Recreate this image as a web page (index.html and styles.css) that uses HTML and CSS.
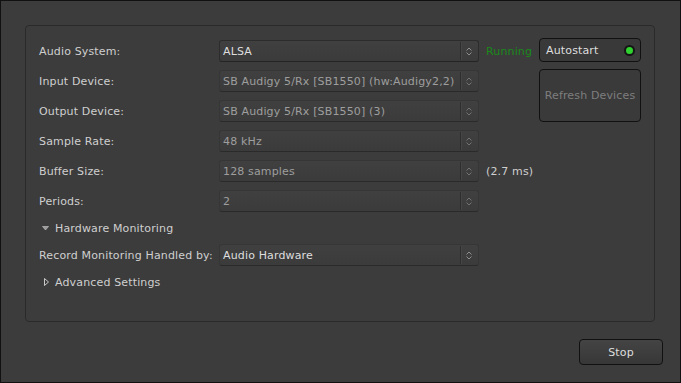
FILE: index.html
```html
<!DOCTYPE html>
<html lang="en">
<head>
  <meta charset="UTF-8" />
  <title>Audio/MIDI Setup</title>
  <link rel="stylesheet" href="styles.css">
</head>
<body>
  <div class="window">
    <div class="frame">
      <div class="grid">
        <div class="label r1">Audio System:</div>
        <div class="combo r1">
          <span class="value">ALSA</span>
          <span class="sep"></span>
          <svg class="arrows" width="6" height="9" viewBox="0 0 6 9"><path d="M0.5 3.5 L3 1 L5.5 3.5 M0.5 5.5 L3 8 L5.5 5.5" fill="none" stroke="#8e8e8e" stroke-width="1"/></svg>
        </div>
        <div class="note running r1">Running</div>
        <button class="btn autostart r1">Autostart <span class="led"></span></button>

        <div class="label r2">Input Device:</div>
        <div class="combo off r2">
          <span class="value">SB Audigy 5/Rx [SB1550] (hw:Audigy2,2)</span>
          <span class="sep"></span>
          <svg class="arrows" width="6" height="9" viewBox="0 0 6 9"><path d="M0.5 3.5 L3 1 L5.5 3.5 M0.5 5.5 L3 8 L5.5 5.5" fill="none" stroke="#737373" stroke-width="1"/></svg>
        </div>
        <button class="btn refresh" disabled>Refresh Devices</button>

        <div class="label r3">Output Device:</div>
        <div class="combo off r3">
          <span class="value">SB Audigy 5/Rx [SB1550] (3)</span>
          <span class="sep"></span>
          <svg class="arrows" width="6" height="9" viewBox="0 0 6 9"><path d="M0.5 3.5 L3 1 L5.5 3.5 M0.5 5.5 L3 8 L5.5 5.5" fill="none" stroke="#737373" stroke-width="1"/></svg>
        </div>

        <div class="label r4">Sample Rate:</div>
        <div class="combo off r4">
          <span class="value">48 kHz</span>
          <span class="sep"></span>
          <svg class="arrows" width="6" height="9" viewBox="0 0 6 9"><path d="M0.5 3.5 L3 1 L5.5 3.5 M0.5 5.5 L3 8 L5.5 5.5" fill="none" stroke="#737373" stroke-width="1"/></svg>
        </div>

        <div class="label r5">Buffer Size:</div>
        <div class="combo off r5">
          <span class="value">128 samples</span>
          <span class="sep"></span>
          <svg class="arrows" width="6" height="9" viewBox="0 0 6 9"><path d="M0.5 3.5 L3 1 L5.5 3.5 M0.5 5.5 L3 8 L5.5 5.5" fill="none" stroke="#737373" stroke-width="1"/></svg>
        </div>
        <div class="note wide r5">(2.7 ms)</div>

        <div class="label r6">Periods:</div>
        <div class="combo off r6">
          <span class="value">2</span>
          <span class="sep"></span>
          <svg class="arrows" width="6" height="9" viewBox="0 0 6 9"><path d="M0.5 3.5 L3 1 L5.5 3.5 M0.5 5.5 L3 8 L5.5 5.5" fill="none" stroke="#737373" stroke-width="1"/></svg>
        </div>

        <div class="expander r7">
          <svg class="tri" width="7" height="5" viewBox="0 0 7 5"><path d="M0.5 0.5 L6.5 0.5 L3.5 4 Z" fill="#9a9a9a" stroke="#c8c8c8" stroke-width="0.6"/></svg>
          Hardware Monitoring
        </div>

        <div class="label r8">Record Monitoring Handled by:</div>
        <div class="combo off r8 bright">
          <span class="value">Audio Hardware</span>
          <span class="sep"></span>
          <svg class="arrows" width="6" height="9" viewBox="0 0 6 9"><path d="M0.5 3.5 L3 1 L5.5 3.5 M0.5 5.5 L3 8 L5.5 5.5" fill="none" stroke="#8e8e8e" stroke-width="1"/></svg>
        </div>

        <div class="expander r9">
          <svg class="tri closed" width="5" height="8" viewBox="0 0 5 8"><path d="M0.5 0.5 L4.5 4 L0.5 7.5 Z" fill="none" stroke="#c8c8c8" stroke-width="1"/></svg>
          Advanced Settings
        </div>
      </div>
    </div>
    <div class="actions">
      <button class="btn stop">Stop</button>
    </div>
  </div>
</body>
</html>
```

FILE: styles.css
```css
body {
  margin: 0;
  background: #3c3c3c;
  font-family: "DejaVu Sans", sans-serif;
  font-size: 11px;
  letter-spacing: 0.15px;
  color: #cfcfcf;
}

.window {
  width: 681px;
  height: 383px;
  box-sizing: border-box;
  border: 1px solid #111;
  background: #3c3c3c;
  padding: 24px 17px 0 24px;
}

.frame {
  width: 630px;
  height: 297px;
  box-sizing: border-box;
  border: 1px solid #2a2a2a;
  border-radius: 4px;
  padding: 14px 13px 0 13px;
}

.grid {
  display: grid;
  grid-template-columns: 180px 260px 60px 102px;
  grid-template-rows: 22px 22px 22px 22px 22px 22px 16px 22px 16px;
  row-gap: 8px;
  align-items: center;
}

.r1 { grid-row: 1; }
.r2 { grid-row: 2; }
.r3 { grid-row: 3; }
.r4 { grid-row: 4; }
.r5 { grid-row: 5; }
.r6 { grid-row: 6; }
.r7 { grid-row: 7; }
.r8 { grid-row: 8; }
.r9 { grid-row: 9; }

.label { grid-column: 1; white-space: nowrap; }

.combo {
  grid-column: 2;
  height: 22px;
  box-sizing: border-box;
  display: flex;
  align-items: center;
  border: 1px solid #2c2c2c;
  border-bottom-color: #242424;
  border-radius: 3px;
  background: linear-gradient(#404040, #3b3b3b);
  color: #dedede;
}

.combo.off {
  border-color: #363636;
  border-bottom-color: #2a2a2a;
  color: #9e9e9e;
}

.combo.bright { color: #dedede; }

.value {
  flex: 1;
  padding-left: 3px;
  white-space: nowrap;
  overflow: hidden;
}

.sep {
  width: 1px;
  height: 18px;
  background: #2e2e2e;
  border-right: 1px solid #464646;
  margin-right: 4px;
}

.arrows { margin-right: 6px; }

.note {
  grid-column: 3;
  padding-left: 7px;
  white-space: nowrap;
}

.running { color: #1a8a1a; }
.wide { grid-column: 3 / 5; color: #cfcfcf; }

.btn {
  font-family: "DejaVu Sans", sans-serif;
  font-size: 11px;
  letter-spacing: 0.15px;
  color: #dedede;
  border: 1px solid #111;
  border-radius: 4px;
  background: linear-gradient(#444, #373737);
  box-sizing: border-box;
  padding: 0;
  margin: 0;
}

.autostart {
  grid-column: 4;
  height: 24px;
  margin-top: -2px;
  display: flex;
  align-items: center;
  justify-content: space-between;
  padding: 0 5px 0 6px;
  background: #393939;
}

.led {
  width: 7px;
  height: 7px;
  border-radius: 50%;
  background: #2fd22f;
  border: 2px solid #151515;
}

.refresh {
  grid-column: 4;
  grid-row: 2 / 4;
  height: 53px;
  align-self: start;
  margin-top: -1px;
  background: #3a3a3a;
  color: #7e7e7e;
}

.expander {
  grid-column: 1 / 3;
  display: flex;
  align-items: center;
  white-space: nowrap;
}

.tri { margin: 0 6px 0 3px; }
.tri.closed { margin: 0 6px 0 5px; }

.actions {
  display: flex;
  justify-content: flex-end;
  margin-top: 17px;
}

.stop {
  width: 84px;
  height: 26px;
}
```
